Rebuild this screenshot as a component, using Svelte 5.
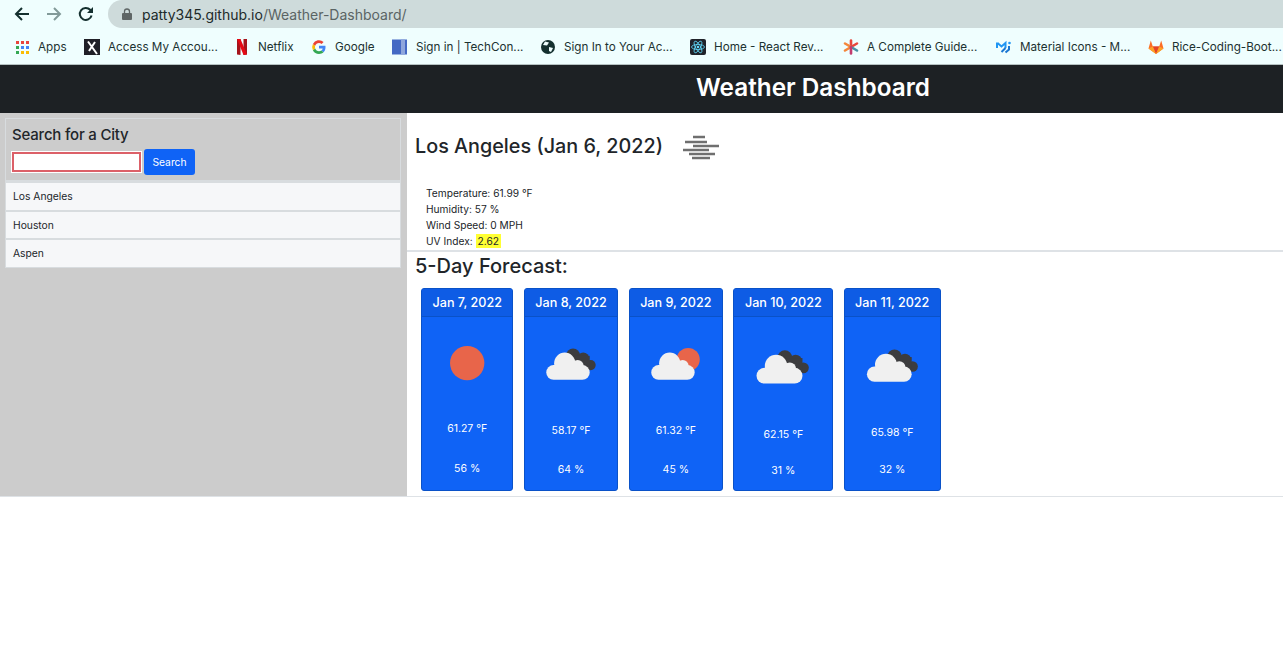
<script>
	const bookmarks = [
		{ icon: "apps", label: "Apps", w: 29 },
		{ icon: "x", label: "Access My Accou...", w: 109 },
		{ icon: "netflix", label: "Netflix", w: 36 },
		{ icon: "google", label: "Google", w: 40 },
		{ icon: "tech", label: "Sign in | TechCon...", w: 107 },
		{ icon: "globe", label: "Sign In to Your Ac...", w: 109 },
		{ icon: "react", label: "Home - React Rev...", w: 112 },
		{ icon: "star", label: "A Complete Guide...", w: 112 },
		{ icon: "mui", label: "Material Icons - M...", w: 111 },
		{ icon: "gitlab", label: "Rice-Coding-Boot...", w: 108 }
	];

	const cities = ["Los Angeles", "Houston", "Aspen"];

	const forecast = [
		{ date: "Jan 7, 2022", icon: "sun", temp: "61.27", hum: 56 },
		{ date: "Jan 8, 2022", icon: "dark", temp: "58.17", hum: 64 },
		{ date: "Jan 9, 2022", icon: "partly", temp: "61.32", hum: 45 },
		{ date: "Jan 10, 2022", icon: "dark", temp: "62.15", hum: 31 },
		{ date: "Jan 11, 2022", icon: "dark", temp: "65.98", hum: 32 }
	];
</script>

<div class="chrome">
	<div class="toolbar">
		<div class="nav">
			<svg width="16" height="16" viewBox="0 0 16 16" class="back"><path d="M15 8H2M8 2 2 8l6 6" /></svg>
			<svg width="16" height="16" viewBox="0 0 16 16" class="forward"><path d="M1 8h13M8 2l6 6-6 6" /></svg>
			<svg width="16" height="16" viewBox="0 0 16 16" class="reload"><path d="M13.6 9.5A6 6 0 1 1 12.2 3.8L14 6" /><path class="fill" d="M15 1v6H9z" /></svg>
		</div>
		<div class="omnibox">
			<svg width="10" height="12" viewBox="0 0 10 12"><path d="M2.5 5V3.5a2.5 2.5 0 0 1 5 0V5" fill="none" stroke="#5f6666" stroke-width="1.3" /><rect y="5" width="10" height="7" rx="1" fill="#5f6666" /></svg>
			<span class="url">patty345.github.io<span class="path">/Weather-Dashboard/</span></span>
		</div>
	</div>
	<div class="bookmarks">
		{#each bookmarks as b}
			<div class="bookmark">
				<svg width="16" height="16" viewBox="0 0 16 16">
					{#if b.icon === "apps"}
						{#each [["#e8453c", "#e8453c", "#e8453c"], ["#34a853", "#4285f4", "#4285f4"], ["#34a853", "#fbbc05", "#fbbc05"]] as row, r}
							{#each row as c, i}
								<rect x={2 + i * 5} y={2 + r * 5} width="3" height="3" fill={c} />
							{/each}
						{/each}
					{:else if b.icon === "x"}
						<rect width="16" height="16" fill="#1f1f27" />
						<path d="M4 2.5 13 15M11 3 5 12" stroke="#fff" stroke-width="2" fill="none" />
					{:else if b.icon === "netflix"}
						<path d="M3 0h3.5v16L3 15.500z" fill="#a5141b" />
						<path d="M9.500 0H13v15.500L9.500 16z" fill="#a5141b" />
						<path d="M3 0h3.500L13 15.500 9.500 16z" fill="#e50914" />
					{:else if b.icon === "google"}
						<path d="M14.500 8.200c0-.5 0-1-.1-1.400H8v2.700h3.700a3.200 3.200 0 0 1-1.400 2.100l2.200 1.700c1.300-1.200 2-3 2-5.100z" fill="#4285f4" />
						<path d="M8 15c1.900 0 3.400-.6 4.500-1.700l-2.200-1.700c-.6.400-1.400.7-2.300.7-1.800 0-3.300-1.200-3.800-2.800L1.900 11.200A6.800 6.800 0 0 0 8 15z" fill="#34a853" />
						<path d="M4.200 9.500a4.100 4.100 0 0 1 0-2.700L1.900 5a6.800 6.800 0 0 0 0 6.200z" fill="#fbbc05" />
						<path d="M8 3.900c1 0 1.900.3 2.600 1l2-1.900A6.800 6.800 0 0 0 1.900 4.900l2.300 1.800C4.700 5.100 6.200 3.900 8 3.900z" fill="#ea4335" />
					{:else if b.icon === "tech"}
						<rect width="15" height="15" y="0.500" fill="#4469c4" />
						<rect x="9" width="4" height="15" y="0.500" fill="#8ea6dc" />
					{:else if b.icon === "globe"}
						<circle cx="8" cy="8" r="7" fill="#14302f" />
						<path d="M5 2.500 9 3.500 7 6.500 3 6zM9 8l4 1-2 4-2-1z" fill="#effefe" />
					{:else if b.icon === "react"}
						<rect width="16" height="16" rx="2" fill="#20232a" />
						<g fill="none" stroke="#61dafb" stroke-width=".8">
							<ellipse cx="8" cy="8" rx="6.500" ry="2.500" />
							<ellipse cx="8" cy="8" rx="6.500" ry="2.500" transform="rotate(60 8 8)" />
							<ellipse cx="8" cy="8" rx="6.500" ry="2.500" transform="rotate(120 8 8)" />
						</g>
						<circle cx="8" cy="8" r="1.300" fill="#61dafb" />
					{:else if b.icon === "star"}
						<g stroke-width="2.600" stroke-linecap="round">
							<path d="M8 8V1.500" stroke="#e8453c" />
							<path d="M8 8 2 4.500" stroke="#f4863b" />
							<path d="M8 8 14 4.500" stroke="#e8453c" />
							<path d="M8 8 2 11.500" stroke="#f4863b" />
							<path d="M8 8 14 11.500" stroke="#4a90a4" />
							<path d="M8 8v6.500" stroke="#c33b6e" />
						</g>
					{:else if b.icon === "mui"}
						<path d="M1 3.500v5.500M1.500 4 5.500 7.500 9.500 4v5" fill="none" stroke="#2196f3" stroke-width="2" />
						<path d="M5.500 13 9.500 9" fill="none" stroke="#1976d2" stroke-width="2" />
						<path d="M13 7v3.500L9.500 13.500" fill="none" stroke="#1976d2" stroke-width="2" />
						<circle cx="13.500" cy="4" r="1.300" fill="#2196f3" />
					{:else if b.icon === "gitlab"}
						<path d="M8 15 .5 9.500 2.800 1.500l2 6h6.400l2-6 2.300 8z" fill="#fc6d26" />
						<path d="M8 15 4.800 7.500h6.400z" fill="#e24329" />
						<path d="M.5 9.500 8 15 4.800 7.500zM15.500 9.500 8 15l3.200-7.500z" fill="#fca326" />
					{/if}
				</svg>
				<span style="width: {b.w}px">{b.label}</span>
			</div>
		{/each}
	</div>
</div>

<header>Weather Dashboard</header>

<div class="layout">
	<aside>
		<div class="search">
			<h2>Search for a City</h2>
			<div class="search-row">
				<input type="text" />
				<button>Search</button>
			</div>
		</div>
		<ul>
			{#each cities as city}
				<li>{city}</li>
			{/each}
		</ul>
	</aside>

	<main>
		<section class="today">
			<div class="title-row">
				<h2>Los Angeles (Jan 6, 2022)</h2>
				<svg width="38" height="38" viewBox="0 0 38 38" class="mist">
					<path d="M10 8h12M2 13h22M10 17h26M0 21h26M6 25h26M9 29h18" />
				</svg>
			</div>
			<div class="stats">
				<p>Temperature: 61.99 °F</p>
				<p>Humidity: 57 %</p>
				<p>Wind Speed: 0 MPH</p>
				<p>UV Index: <span class="uv">2.62</span></p>
			</div>
		</section>

		<section class="forecast">
			<h2>5-Day Forecast:</h2>
			<div class="cards">
				{#each forecast as day}
					<div class="card">
						<div class="card-header">{day.date}</div>
						<div class="card-body">
							<svg viewBox="0 0 100 100" class="icon">
								{#if day.icon === "sun"}
									<circle cx="50" cy="51" r="19" fill="#e8654a" />
								{:else}
									{#if day.icon === "partly"}
										<circle cx="63" cy="46" r="12.500" fill="#e8654a" />
									{:else}
										<g fill="#3c3c3e">
											<circle cx="52" cy="41.500" r="7.500" />
											<circle cx="63" cy="45" r="6.500" />
											<circle cx="71" cy="52" r="5.500" />
											<rect x="52" y="42" width="18" height="14" />
										</g>
									{/if}
									<g fill="#f0f0f0">
										<circle cx="43" cy="50" r="11.500" />
										<circle cx="57" cy="53" r="6.500" />
										<rect x="23" y="52" width="47" height="16" rx="8" />
									</g>
								{/if}
							</svg>
							<div class="readings">
								<p>{day.temp} °F</p>
								<p>{day.hum} %</p>
							</div>
						</div>
					</div>
				{/each}
			</div>
		</section>
	</main>
</div>

<style>
	:global(body) {
		margin: 0;
		padding: 0;
		background-color: #fff;
		color: #212529;
		font-family: Inter, "Liberation Sans", sans-serif;
	}

	.toolbar {
		height: 28px;
		display: flex;
		background-color: #effefe;
	}

	.nav {
		width: 108px;
		display: flex;
		align-items: center;
		gap: 16px;
		padding-left: 14px;
		box-sizing: border-box;
	}

	.nav svg {
		fill: none;
		stroke-width: 2;
	}

	.back, .reload {
		stroke: #14302f;
	}

	.forward {
		stroke: #829a99;
	}

	.fill {
		fill: #14302f;
		stroke: none;
	}

	.omnibox {
		flex: 1;
		display: flex;
		align-items: center;
		gap: 10px;
		padding-left: 14px;
		background-color: #cedbdb;
		border-radius: 14px 0 0 14px;
	}

	.url {
		font-size: 14px;
		color: #202a2a;
	}

	.path {
		color: #5a6464;
	}

	.bookmarks {
		height: 37px;
		box-sizing: border-box;
		display: flex;
		align-items: center;
		padding: 1px 0 0 14px;
		background-color: #effefe;
		border-bottom: 1px solid #b5c2c2;
	}

	.bookmark {
		display: flex;
		align-items: center;
		gap: 8px;
		margin-right: 17px;
		font-size: 11.700px;
		color: #1c3231;
		white-space: nowrap;
	}

	header {
		height: 48px;
		box-sizing: border-box;
		display: flex;
		align-items: center;
		justify-content: center;
		padding: 0 0 4px 343px;
		background-color: #1d2124;
		color: #fff;
		font-size: 24.300px;
		font-weight: 600;
	}

	.layout {
		display: flex;
		height: 383px;
		border-bottom: 1px solid #dee2e6;
	}

	aside {
		width: 407px;
		flex-shrink: 0;
		box-sizing: border-box;
		padding: 5px 6px 5px 5px;
		background-color: #ccc;
	}

	.search {
		padding: 4px 6px 5px;
		border: 1px solid #d8dcdf;
		border-bottom: none;
		background-color: #ccc;
	}

	.search h2 {
		margin: 0 0 2px;
		font-size: 15px;
		letter-spacing: -0.2px;
		font-weight: 500;
		line-height: 24px;
	}

	.search-row {
		display: flex;
		align-items: center;
		gap: 3px;
	}

	input {
		width: 129px;
		height: 20px;
		padding: 0;
		box-sizing: border-box;
		border: 2px solid #dc6068;
		outline: 1px solid #fff;
		background-color: #fff;
	}

	button {
		width: 51px;
		height: 26px;
		padding: 0;
		border: none;
		border-radius: 3px;
		background-color: #0f63f6;
		color: #fff;
		font-family: inherit;
		font-size: 10.300px;
	}

	ul {
		margin: 0;
		padding: 0;
		list-style: none;
		border: 1px solid #d8dcdf;
		border-top-width: 3px;
		background-color: #d8dcdf;
		display: flex;
		flex-direction: column;
		gap: 2px;
	}

	li {
		height: 26.500px;
		display: flex;
		align-items: center;
		padding-left: 7px;
		background-color: #f6f7f9;
		font-size: 10.300px;
	}

	main {
		flex: 1;
		min-width: 0;
	}

	h2 {
		font-weight: 500;
	}

	.today {
		height: 139px;
		box-sizing: border-box;
		border-bottom: 2px solid #dee2e6;
	}

	.title-row {
		display: flex;
		align-items: flex-start;
		gap: 20px;
		padding: 14px 0 0 8px;
	}

	.title-row h2 {
		margin: 0;
		font-size: 19.800px;
		line-height: 38px;
	}

	.mist {
		margin-top: 2px;
		fill: none;
		stroke: #6f6f6f;
		stroke-width: 2.500;
	}

	.stats {
		padding: 18px 0 0 19px;
		font-size: 10.200px;
	}

	.stats p {
		margin: 0;
		line-height: 16px;
	}

	.uv {
		padding: 1px 2px;
		background-color: #ffff33;
	}

	.forecast h2 {
		margin: 0;
		padding-left: 8px;
		font-size: 20px;
		line-height: 28px;
	}

	.cards {
		display: flex;
		gap: 10.400px;
		padding: 8px 0 0 14px;
	}

	.card {
		height: 203px;
		box-sizing: border-box;
		display: flex;
		flex-direction: column;
		border: 1px solid #0a52c8;
		border-radius: 3px;
		background-color: #0f63f6;
		color: #fff;
		overflow: hidden;
	}

	.card-header {
		height: 27px;
		flex-shrink: 0;
		display: flex;
		align-items: center;
		justify-content: center;
		padding: 0 10.500px;
		border-bottom: 1px solid #0a52c8;
		background-color: #0e5ce5;
		font-size: 12.600px;
		font-weight: 500;
		white-space: nowrap;
	}

	.card-body {
		flex: 1;
		width: 0;
		min-width: 100%;
		display: flex;
		flex-direction: column;
	}

	.icon {
		width: 100%;
		flex-shrink: 0;
		display: block;
	}

	.readings {
		flex: 1;
		display: flex;
		flex-direction: column;
		justify-content: space-around;
		padding: 2px 0 1px;
		text-align: center;
		font-size: 10.500px;
	}

	.readings p {
		margin: 0;
		line-height: 20px;
	}
</style>
